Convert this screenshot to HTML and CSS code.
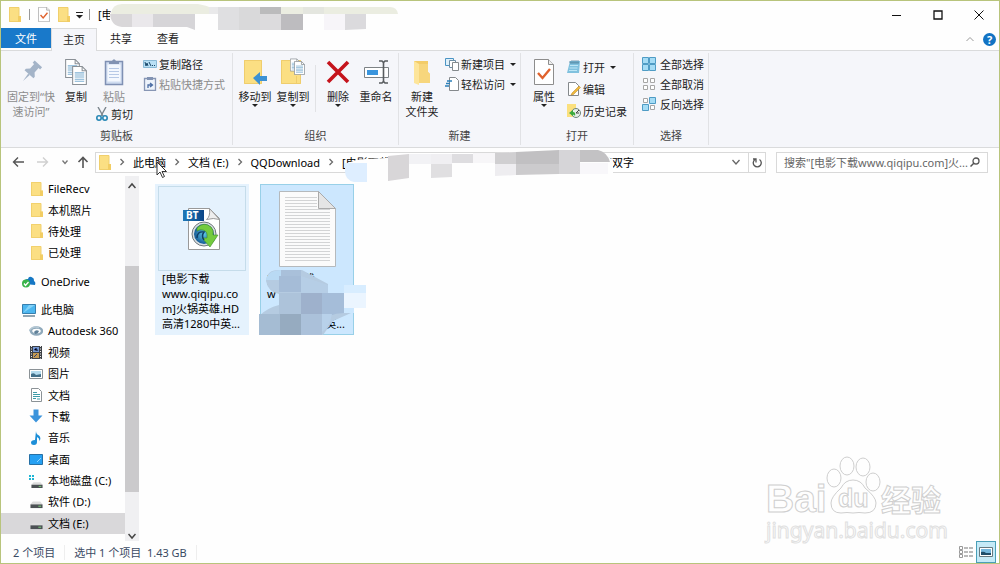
FILE: index.html
```html
<!DOCTYPE html>
<html lang="zh-CN">

<head>
    <meta charset="UTF-8">
    <meta name="viewport" content="width=device-width, initial-scale=1.0">
    <title>文件资源管理器</title>
    <link rel="stylesheet" href="styles.css">
</head>

<body>
    <svg class="defs" aria-hidden="true">
        <symbol id="folder" viewBox="0 0 12 15" preserveAspectRatio="none">
            <path d="M0 0h10v15H0z" fill="#fbdf83"/>
            <path d="M0.5.5h9.500v14h-9.500z" fill="none" stroke="#f0cf6c"/>
            <path d="M9 9h3v6H9z" fill="#f2cd63"/>
        </symbol>
        <symbol id="chev" viewBox="0 0 6 8">
            <path d="M1.500 1l3 3-3 3" fill="none" stroke="#6b6b6b" stroke-width="1.300"/>
        </symbol>
        <symbol id="checkdoc" viewBox="0 0 20 26">
            <path d="M.5.5h14l5 5v20H.5z" fill="#fff" stroke="#8d8d8d"/>
            <path d="M14.500.5v5h5" fill="#eee" stroke="#8d8d8d"/>
            <path d="M4 14l4.500 5L16 10" fill="none" stroke="#e0622d" stroke-width="2.400"/>
        </symbol>
        <symbol id="page" viewBox="0 0 14 18">
            <path d="M.5.5h9l4 4v13H.5z" fill="#fff" stroke="#8a9096"/>
            <path d="M9.500.5v4h4" fill="none" stroke="#8a9096"/>
            <path d="M2.500 6.500h9M2.500 8.500h9M2.500 10.500h9M2.500 12.500h9M2.500 14.500h9" stroke="#7fb0d2"/>
        </symbol>
        <symbol id="drive" viewBox="0 0 14 14">
            <path d="M3 6h8l2.500 3H.5z" fill="#dcdcdc"/>
            <path d="M.5 9h13v4H.5z" fill="#4c5154"/>
            <path d="M9 11h3" stroke="#7ddc7a"/>
        </symbol>
    </svg>

    <div class="window">
        <header class="titlebar">
            <svg class="ic-folder"><use href="#folder"/></svg>
            <span class="bar"></span>
            <svg class="ic-check"><use href="#checkdoc"/></svg>
            <svg class="ic-folder"><use href="#folder"/></svg>
            <svg class="ic-more" viewBox="0 0 7 8"><path d="M0 1.500h7" stroke="#222"/><path d="M0 4h7L3.500 7.500z" fill="#222"/></svg>
            <span class="bar"></span>
            <h1>[电影下载www.qiqipu.com]火锅英雄.HD高清1280中英双字</h1>
            <div class="winbtns">
                <button aria-label="最小化"><svg viewBox="0 0 10 10"><path d="M0 5.500h9" stroke="#111"/></svg></button>
                <button aria-label="最大化"><svg viewBox="0 0 10 10"><path d="M1 1h8v8H1z" fill="none" stroke="#111" stroke-width="1.300"/></svg></button>
                <button aria-label="关闭"><svg viewBox="0 0 10 10"><path d="M.5.5l9 9M9.500.5l-9 9" stroke="#111"/></svg></button>
            </div>
            <!-- censored title -->
            <svg class="smear smear-title" viewBox="0 0 290 28">
                <path d="M0 10Q2 1 12 1H280Q287 4 288 11V27H0z" fill="#fefefe"/>
                <path d="M1 11Q2 1 12 1H88Q98 3 99 4H280Q287 4 288 11z" fill="#ebede1"/>
                <path d="M0 11h22v13H12Q1 23 0 11z" fill="#d9d7d9"/>
                <path d="M22 11h21v13H22z" fill="#eae8eb"/>
                <path d="M43 11h42v16l-8-3H43z" fill="#d6d5d8"/>
                <path d="M99 4h9v7h-9z" fill="#e9e9ea"/>
                <path d="M108 4h21v23h-21z" fill="#dfdfe1"/>
                <path d="M129 4h21v23h-21z" fill="#d9d9da"/>
                <path d="M150 11h21v16h-21z" fill="#dcdbdd"/>
                <path d="M150 4h21v7h-21z" fill="#bbbbbc"/>
                <path d="M171 11h22v16h-22z" fill="#bdbcbf"/>
                <path d="M193 4h21v7h-21z" fill="#e4e6df"/>
                <path d="M214 11h21v16h-21z" fill="#f7f5f9"/>
                <path d="M235 11h21v15l-21 1z" fill="#dbdadd"/>
            </svg>
        </header>

        <nav class="tabs">
            <button class="tab file">文件</button>
            <button class="tab active">主页</button>
            <button class="tab">共享</button>
            <button class="tab">查看</button>
            <div class="tabs-right">
                <svg class="ic-up" viewBox="0 0 8 6"><path d="M.5 5L4 1.500 7.500 5" fill="none" stroke="#999"/></svg>
                <button class="help" aria-label="帮助">?</button>
            </div>
        </nav>

        <section class="ribbon">
            <div class="group clipboard">
                <div class="tools">
                    <button class="big wide off">
                        <svg viewBox="0 0 28 28"><g transform="rotate(42 14 14)" fill="#a4b4c8"><path d="M9 3h10v3h-2v6l3 3v2H8v-2l3-3V6H9z"/><path d="M13 17h2l-1 9z"/></g></svg>
                        <span>固定到“快<br>速访问”</span>
                    </button>
                    <button class="big">
                        <svg viewBox="0 0 28 28"><use href="#page" x="3" y="1" width="15" height="19"/><use href="#page" x="10" y="8" width="15" height="19"/></svg>
                        <span>复制</span>
                    </button>
                    <div class="paste">
                        <button class="big off">
                            <svg viewBox="0 0 28 28"><path d="M5.500 3.500h17v23h-17z" fill="#cfdcf0" stroke="#7f90b3" stroke-width="1.500"/><path d="M7.500 6.500h13v17h-13z" fill="#f4f8fe"/><path d="M9 10.500h10M9 13.500h10M9 16.500h10M9 19.500h10" stroke="#b7c9e6"/><path d="M9 3h3q2-3.500 4 0h3v3H9z" fill="#8293b3"/></svg>
                            <span>粘贴</span>
                        </button>
                        <button class="small">
                            <svg viewBox="0 0 14 14"><path d="M3 0l5 9M11 0L6 9" stroke="#7b858c" stroke-width="1.400"/><circle cx="4" cy="11" r="2.200" fill="none" stroke="#2787b5" stroke-width="1.600"/><circle cx="10" cy="11" r="2.200" fill="none" stroke="#2787b5" stroke-width="1.600"/></svg>
                            剪切
                        </button>
                    </div>
                    <div class="list">
                        <button class="small">
                            <svg viewBox="0 0 14 14"><path d="M.5 3.500h13v7H.5z" fill="#b9e0f5" stroke="#8ab9d5"/><path d="M2 5l1 4 1-3 1 3M6 5l2 4M9 8.500h1M11 8.500h1" fill="none" stroke="#19486b"/></svg>
                            复制路径
                        </button>
                        <button class="small off">
                            <svg viewBox="0 0 14 14"><path d="M1.500 1.500h11v12h-11z" fill="#edf3fb" stroke="#8796b4" stroke-width="1.300"/><path d="M4 0h6v3H4z" fill="#8293b3"/><path d="M5 11V8h4M7 6l2.500 2L7 10" fill="none" stroke="#4c6ea5" stroke-width="1.300"/></svg>
                            粘贴快捷方式
                        </button>
                    </div>
                </div>
                <h2>剪贴板</h2>
            </div>

            <div class="group organize">
                <div class="tools">
                    <button class="big drop">
                        <svg viewBox="0 0 28 28"><path d="M3 2h18v24H3z" fill="#fbdf83"/><path d="M3.500 2.500h17v23h-17z" fill="none" stroke="#efcd6d"/><path d="M12 20l7-6v4h7v5h-7v4z" fill="#3c91d3"/></svg>
                        <span>移动到</span>
                    </button>
                    <button class="big drop">
                        <svg viewBox="0 0 28 28"><path d="M2 2h20v24H2z" fill="#fbdf83"/><path d="M2.500 2.500h19v23h-19zM17.500 18v8" fill="none" stroke="#efcd6d"/><use href="#page" x="11" y="0" width="10" height="14"/><use href="#page" x="15" y="3" width="11" height="14"/></svg>
                        <span>复制到</span>
                    </button>
                    <span class="line"></span>
                    <button class="big drop">
                        <svg viewBox="0 0 28 28"><path d="M4 4l20 20M24 4L4 24" stroke="#c5141c" stroke-width="3.600"/></svg>
                        <span>删除</span>
                    </button>
                    <button class="big">
                        <svg viewBox="0 0 28 28"><path d="M2.500 9.500h24v10h-24z" fill="#fff" stroke="#7d8285"/><path d="M5 12h11v5H5z" fill="#3a95dd"/><path d="M17 3h3l1.500 1.500L23 3h3M21.500 4v20M17 25h3l1.500-1.500L23 25h3" fill="none" stroke="#585c5f" stroke-width="1.600"/></svg>
                        <span>重命名</span>
                    </button>
                </div>
                <h2>组织</h2>
            </div>

            <div class="group">
                <div class="tools">
                    <button class="big">
                        <svg viewBox="0 0 28 28"><path d="M6 3h14v11l2 2v9H6z" fill="#f3cc68"/><path d="M6 3l5 3v21l-5-2z" fill="#fde59a"/><path d="M11 6h9v8l2 2v9H11z" fill="#f7d67c"/></svg>
                        <span>新建<br>文件夹</span>
                    </button>
                    <div class="list">
                        <button class="small arrow">
                            <svg viewBox="0 0 14 14"><path d="M.5 1.500h8v7h-8z" fill="#dff0fa" stroke="#4b94c4"/><path d="M4.500 3.500h6v7h-6z" fill="#fff" stroke="#6d8da3"/><path d="M7.500 5.500h6v8h-6z" fill="#fff" stroke="#858a8d"/></svg>
                            新建项目
                        </button>
                        <button class="small arrow">
                            <svg viewBox="0 0 14 14"><path d="M4.500.5h6l3 3v10h-9z" fill="#fff" stroke="#85898c"/><path d="M2 4h5M1 6.500h4M0 9h4" stroke="#2b7fb8" stroke-width="1.300" fill="none"/></svg>
                            轻松访问
                        </button>
                    </div>
                </div>
                <h2>新建</h2>
            </div>

            <div class="group">
                <div class="tools">
                    <button class="big drop">
                        <svg viewBox="0 0 28 28"><use href="#checkdoc" x="4" y="1" width="20" height="26"/></svg>
                        <span>属性</span>
                    </button>
                    <div class="list loose">
                        <button class="small arrow">
                            <svg viewBox="0 0 14 14"><path d="M3 1h10l-1 12H0z" fill="#80c1de"/><path d="M3 3h9M3 1v2M5 0v3M7 0v3M9 0v3M11 0v3" stroke="#4c7d96" stroke-width=".7"/><path d="M3 5.500h8M2.500 8h8M2 10.500h8" stroke="#bde6f5"/></svg>
                            打开
                        </button>
                        <button class="small">
                            <svg viewBox="0 0 14 14"><path d="M1.500.5h7l3 3v10h-10z" fill="#fff" stroke="#85898c"/><path d="M5 11l7-7 1.500 1.500-7 7L4 13z" fill="#efb93d" stroke="#b78322" stroke-width=".5"/></svg>
                            编辑
                        </button>
                        <button class="small">
                            <svg viewBox="0 0 14 14"><path d="M0 0h9v13H0z" fill="#fbe07e"/><circle cx="9" cy="9" r="4.500" fill="#e5efe8" stroke="#6d8379"/><path d="M9 9l3-3M9 9h3" stroke="#444"/><path d="M2 9l4-3v2q3 0 2 4Q6 9 6 12z" fill="#39aa3c"/></svg>
                            历史记录
                        </button>
                    </div>
                </div>
                <h2>打开</h2>
            </div>

            <div class="group select">
                <div class="tools">
                    <div class="list">
                        <button class="small">
                            <svg viewBox="0 0 14 14"><path d="M.5.5h6v6h-6zM7.500.5h6v6h-6zM.5 7.500h6v6h-6zM7.500 7.500h6v6h-6z" fill="#a5dcf5" stroke="#4f9cc5"/></svg>
                            全部选择
                        </button>
                        <button class="small">
                            <svg viewBox="0 0 14 14"><path d="M1.500 1.500h4v4h-4zM8.500 1.500h4v4h-4zM1.500 8.500h4v4h-4zM8.500 8.500h4v4h-4z" fill="#fff" stroke="#a6a6a6"/></svg>
                            全部取消
                        </button>
                        <button class="small">
                            <svg viewBox="0 0 14 14"><path d="M1.500 1.500h4v4h-4zM8.500 8.500h4v4h-4z" fill="#fff" stroke="#a6a6a6"/><path d="M7.500.5h6v6h-6zM.5 7.500h6v6h-6z" fill="#a5dcf5" stroke="#4f9cc5"/></svg>
                            反向选择
                        </button>
                    </div>
                </div>
                <h2>选择</h2>
            </div>
        </section>

        <div class="navbar">
            <div class="arrows">
                <svg viewBox="0 0 12 12"><path d="M12 6H1.500M6 1.500L1.500 6 6 10.500" fill="none" stroke="#555" stroke-width="1.400"/></svg>
                <svg viewBox="0 0 12 12"><path d="M0 6h10.500M6 1.500L10.500 6 6 10.500" fill="none" stroke="#d0d0d0" stroke-width="1.400"/></svg>
                <svg class="tiny" viewBox="0 0 6 6"><path d="M.5 1.500L3 4.500l2.500-3" fill="none" stroke="#777" stroke-width="1.300"/></svg>
                <svg viewBox="0 0 12 12"><path d="M6 12V1.500M1.500 6L6 1.500 10.500 6" fill="none" stroke="#555" stroke-width="1.600"/></svg>
            </div>
            <div class="address">
                <svg class="ic-folder"><use href="#folder"/></svg>
                <svg class="chev"><use href="#chev"/></svg>
                <a href="#">此电脑</a>
                <svg class="chev"><use href="#chev"/></svg>
                <a href="#">文档 (E:)</a>
                <svg class="chev"><use href="#chev"/></svg>
                <a href="#">QQDownload</a>
                <svg class="chev"><use href="#chev"/></svg>
                <a href="#">[电影下载www.qiqipu.com]火锅英雄.HD高清1280中英双字</a>
                <button class="history" aria-label="历史"><svg viewBox="0 0 8 8"><path d="M.5 2L4 6l3.500-4" fill="none" stroke="#666" stroke-width="1.300"/></svg></button>
                <button class="refresh" aria-label="刷新"><svg viewBox="0 0 10 12"><path d="M7.500 3.500a4 4 0 1 1-4.500 0M1 3h3v3.500" fill="none" stroke="#555" stroke-width="1.300"/></svg></button>
            </div>
            <div class="search">
                <input type="text" aria-label="搜索" placeholder="搜索&quot;[电影下载www.qiqipu.com]火...">
                <svg viewBox="0 0 10 10"><circle cx="6" cy="4" r="3" fill="none" stroke="#555" stroke-width="1.300"/><path d="M4 6L.5 9.500" stroke="#555" stroke-width="1.500"/></svg>
            </div>
            <svg class="smear smear-path" viewBox="0 0 270 34">
                <path d="M3 14Q8 11 20 10L62 8 150 4 250 1Q262 4 268 12V25H3z" fill="#fefefe"/>
                <path d="M0 14h22v19H9Q0 31 0 22z" fill="#deeeff"/>
                <path d="M43 7l21-2v24l-21 3z" fill="#d8d6d8"/>
                <path d="M64 5h22v10H64z" fill="#f2f2f5"/>
                <path d="M86 5h21v10H86z" fill="#f0eff2"/>
                <path d="M107 5h21v9h-21z" fill="#dedde0"/>
                <path d="M86 15h21v13l-21 1z" fill="#e0dfe1"/>
                <path d="M128 4h22v10h-22z" fill="#f7f6f8"/>
                <path d="M150 4l21-1v12h-21z" fill="#d0cfd1"/>
                <path d="M150 15h21v11l-21 1z" fill="#eeedf0"/>
                <path d="M171 3l43-2v14h-43z" fill="#c1c0c2"/>
                <path d="M171 15h43v10l-43 1z" fill="#cccbcd"/>
                <path d="M214 1h21v24h-21z" fill="#d6d5d8"/>
                <path d="M235 1h18Q262 3 265 13H235z" fill="#c3c2c4"/>
                <path d="M235 14h28v11h-28z" fill="#f8f7fa"/>
            </svg>
            <svg class="cursor" viewBox="0 0 12 18"><path d="M1 1v13l3-3 2.500 5.500 2-1L6 10.500h4.500z" fill="#fff" stroke="#333"/></svg>
        </div>

        <main class="content">
            <nav class="tree">
                <a href="#" class="sub"><svg class="ic-folder"><use href="#folder"/></svg>FileRecv</a>
                <a href="#" class="sub"><svg class="ic-folder"><use href="#folder"/></svg>本机照片</a>
                <a href="#" class="sub"><svg class="ic-folder"><use href="#folder"/></svg>待处理</a>
                <a href="#" class="sub"><svg class="ic-folder"><use href="#folder"/></svg>已处理</a>
                <span class="space"></span>
                <a href="#"><svg viewBox="0 0 14 14"><path d="M3 10q-2-5 3-5 1-4 5-1 1 0 1 3 2 1 1 4z" fill="#1577c4"/><circle cx="4" cy="9.500" r="4" fill="#39b44a"/><path d="M2 9.500l1.500 2 3-3.500" fill="none" stroke="#fff" stroke-width="1.300"/></svg>OneDrive</a>
                <span class="space"></span>
                <a href="#"><svg viewBox="0 0 14 14"><path d="M.5 1.500h13v9H.5z" fill="#4cb6ef" stroke="#377fae"/><path d="M1 10l6-8h6z" fill="#83d2f8"/><path d="M1 13h12" stroke="#6d8798" stroke-width="1.500"/></svg>此电脑</a>
                <a href="#" class="sub"><svg viewBox="0 0 14 14"><ellipse cx="7.500" cy="7" rx="5.500" ry="3.500" fill="none" stroke="#8fa9bb" stroke-width="2.400"/><path d="M0 7q4-6 10-3" fill="none" stroke="#b5c8d4" stroke-width="1.500"/><path d="M5 8q2-3 5-1-1 3-4 3z" fill="#5f8098"/></svg>Autodesk 360</a>
                <a href="#" class="sub"><svg viewBox="0 0 14 14"><path d="M1 1h12v13H1z" fill="#3d4045"/><path d="M4 2h6v5H4z" fill="#7799d2"/><path d="M4 8h6v5H4z" fill="#c39a53"/><path d="M2.500 1v13M11.500 1v13" stroke="#eee" stroke-dasharray="1 1.500"/><path d="M5 5l2-2 2 3M5 12l3-3" stroke="#273f7c"/></svg>视频</a>
                <a href="#" class="sub"><svg viewBox="0 0 14 14"><path d="M.5 2.500h13v9H.5z" fill="#fff" stroke="#8b9296"/><path d="M2 4h10v6H2z" fill="#b5dcef"/><path d="M2 7q3-2 5 1l5-1v3H2z" fill="#43718b"/></svg>图片</a>
                <a href="#" class="sub"><svg viewBox="0 0 14 14"><path d="M2.500.5h7l3 3v10h-10z" fill="#fff" stroke="#8b9296"/><path d="M4 4.500h4M4 6.500h7M4 8.500h7M4 10.500h3M8 11h3" stroke="#3c9ba8"/></svg>文档</a>
                <a href="#" class="sub"><svg viewBox="0 0 14 14"><path d="M4.500.5h5v6h4L7 13.500.5 6.500h4z" fill="#3c94dc"/></svg>下载</a>
                <a href="#" class="sub"><svg viewBox="0 0 14 14"><path d="M7 0q0 3 3 4.500 2.500 2.500.5 5.500 0-3-2.500-4v5q0 3-3 3T2 11.500 6 9z" fill="#1d8fd8"/></svg>音乐</a>
                <a href="#" class="sub"><svg viewBox="0 0 14 14"><path d="M.5 2.500h13v10H.5z" fill="#26a0f2" stroke="#2670a5"/><path d="M8 10l4-4" stroke="#8ed4ff"/></svg>桌面</a>
                <a href="#" class="sub"><svg viewBox="0 0 14 14"><path d="M0 1h2v2H0zM3 1h2v2H3zM0 4h2v2H0zM3 4h2v2H3z" fill="#1db5d4"/><use href="#drive" x="2" y="3" width="12" height="12"/></svg>本地磁盘 (C:)</a>
                <a href="#" class="sub"><svg viewBox="0 0 14 14"><use href="#drive" x="1" y="1" width="13" height="13"/></svg>软件 (D:)</a>
                <a href="#" class="sub current"><svg viewBox="0 0 14 14"><use href="#drive" x="1" y="1" width="13" height="13"/></svg>文档 (E:)</a>
            </nav>
            <div class="scroll">
                <svg viewBox="0 0 8 8"><path d="M.5 6L4 2l3.500 4" fill="none" stroke="#444" stroke-width="1.500"/></svg>
                <div class="track"><div class="thumb"></div></div>
                <svg viewBox="0 0 8 8"><path d="M.5 2L4 6l3.500-4" fill="none" stroke="#444" stroke-width="1.500"/></svg>
            </div>
            <section class="files">
                <figure class="item hover">
                    <div class="thumbbox">
                        <svg class="ic-bt" viewBox="0 0 38 46">
                            <defs>
                                <linearGradient id="btblue" x1="0" x2="1"><stop offset="0" stop-color="#1f79b8"/><stop offset="1" stop-color="#0c4587"/></linearGradient>
                                <radialGradient id="btball"><stop offset="0" stop-color="#5fc8e8"/><stop offset="1" stop-color="#145a96"/></radialGradient>
                            </defs>
                            <path d="M5.500 2.500h21l10 10v31h-31z" fill="#fff" stroke="#999"/>
                            <path d="M26.500 2.500q1 8-3 11 7-2 13 0z" fill="#eee" stroke="#999"/>
                            <circle cx="21" cy="28" r="12" fill="#d9dee0" stroke="#70797d"/>
                            <circle cx="21" cy="28" r="10" fill="url(#btball)"/>
                            <path d="M14 22q7-7 14-1 3 3 2 8h5l-8 12-8-9h5q1-7-4-8-3-1-6 1z" fill="#74cb3f" stroke="#3f8f2c" stroke-width=".6"/>
                            <path d="M14 32q0-7 7-6-3 4 0 8" fill="none" stroke="#103f68" stroke-width="1.500"/>
                            <path d="M0 4h21v11H0z" fill="url(#btblue)"/>
                            <text x="3" y="13" font-size="10">BT</text>
                        </svg>
                    </div>
                    <figcaption>[电影下载<br>www.qiqipu.co<br>m]火锅英雄.HD<br>高清1280中英...</figcaption>
                </figure>
                <figure class="item selected">
                    <div class="thumbbox">
                        <svg class="ic-txt" viewBox="0 0 57 76">
                            <path d="M.5.5h39l17 17v58H.5z" fill="#fbfbfb" stroke="#b5b9bc"/>
                            <path d="M6 6.500h32M6 9.500h32M6 12.500h32M6 15.500h32M6 18.500h45M6 21.500h45M6 24.500h45M6 27.500h45M6 30.500h45M6 33.500h45M6 36.500h45M6 39.500h45M6 42.500h45M6 45.500h45M6 48.500h45M6 51.500h45M6 54.500h45M6 57.500h45M6 60.500h45M6 63.500h45M6 66.500h45M6 69.500h45" stroke="#d3d4d5"/>
                            <path d="M39.500.5v17h17z" fill="#e5e5e5" stroke="#aaa"/>
                        </svg>
                    </div>
                    <figcaption>[电影下载<br>www.qiqipu.co<br>m]火锅英雄.HD<br>高清1280中英...</figcaption>
                    <svg class="smear smear-file" viewBox="0 0 114 72">
                        <path d="M5 35h19v14H5zM17 23h10v12H17zM62 19h27v16H62z" fill="#cce7fe"/>
                        <path d="M7 15Q8 4 19 4h24l26 14v9h38v20H92l-18 8-10 14H0V50Q8 42 20 39L20 28Q9 26 7 15z" fill="#b5cbe1"/>
                        <path d="M7 14Q9 4 22 4v10z" fill="#b9daf4"/>
                        <path d="M22 4h20v6H22z" fill="#a9c0da"/>
                        <path d="M20 10h22v16H20z" fill="#a5bcd7"/>
                        <path d="M42 10l27 9v8H42z" fill="#b6cee6"/>
                        <path d="M20 27h22v21H20z" fill="#adc3da"/>
                        <path d="M42 27h21v21H42z" fill="#9eb1cc"/>
                        <path d="M63 27h22v20q-8 0-15 3l-7-2z" fill="#a5bdd9"/>
                        <path d="M0 48h21v21H0z" fill="#a5bcd3"/>
                        <path d="M21 48h21v21H21z" fill="#96abc0"/>
                        <path d="M42 48h21v21H42z" fill="#abc1da"/>
                        <path d="M63 48h10q-2 12-10 18z" fill="#b8d1ea"/>
                        <path d="M85 19h22v8H85z" fill="#d8edff"/>
                        <path d="M85 27h22v20H85z" fill="#cce7fe"/>
                        <path d="M85 27h22v15H85z" fill="#ebf5ff"/>
                        <path d="M95 42h12v5H95z" fill="#fefefe"/>
                    </svg>
                </figure>
                <svg class="watermark" viewBox="0 0 184 92">
                    <g class="mark">
                        <text class="bai" x="2" y="57" font-size="39">Bai</text>
                        <ellipse cx="70" cy="23" rx="7" ry="9"/>
                        <ellipse cx="83" cy="11" rx="7" ry="9"/>
                        <ellipse cx="99" cy="12" rx="7" ry="9"/>
                        <ellipse cx="109" cy="27" rx="7" ry="9"/>
                        <path d="M89 25q8 0 12 8 11 9 11 15 0 10-11 10-6-1-12 0-6-1-12 0-10 0-10-10 0-6 10-15 4-8 12-8z"/>
                        <text class="du" x="74" y="52" font-size="25">du</text>
                        <text class="jy" x="117" y="56" font-size="30">经验</text>
                    </g>
                    <text class="url" x="2" y="83" font-size="21">jingyan.baidu.com</text>
                </svg>
            </section>
        </main>

        <footer class="status">
            <span>2 个项目</span>
            <span>选中 1 个项目&nbsp; 1.43 GB</span>
            <div class="views">
                <button aria-label="详细信息"><svg viewBox="0 0 14 12"><path d="M.5.5h3v3h-3zM.5 4.500h3v3h-3zM.5 8.500h3v3h-3z" fill="none" stroke="#999"/><path d="M5 2h4M10 2h4M5 6h4M10 6h4M5 10h4M10 10h4" stroke="#777"/></svg></button>
                <button class="on" aria-label="大图标"><svg viewBox="0 0 14 12"><path d="M.5 1.500h13v9H.5z" fill="#fff" stroke="#67787f"/><path d="M2 3h10v6H2z" fill="#74b7dc"/><path d="M2 6q3-1 5 1h5v2H2z" fill="#1f4d68"/></svg></button>
            </div>
        </footer>
    </div>
</body>

</html>
```
FILE: styles.css
```css
* {
    margin: 0;
    padding: 0;
    box-sizing: border-box;
}

body {
    font-family: "Noto Sans", "Noto Sans CJK SC", sans-serif;
    font-size: 11px;
    line-height: 15px;
    color: #222;
    background: #fefefe;
}

button {
    font: inherit;
    color: inherit;
    background: none;
    border: none;
}

a {
    color: inherit;
    text-decoration: none;
}

h1,
h2 {
    font-size: 11px;
    font-weight: normal;
}

svg {
    display: block;
    flex: none;
}

.defs {
    position: absolute;
    width: 0;
    height: 0;
}

.window {
    display: flex;
    flex-direction: column;
    height: 100vh;
    border: 1px solid #b8c47c;
}

.ic-folder {
    width: 12px;
    height: 15px;
}

.smear {
    position: absolute;
    pointer-events: none;
}

/* title bar */
.titlebar {
    position: relative;
    display: flex;
    align-items: center;
    gap: 8px;
    height: 27px;
    padding-left: 8px;
}

.titlebar .bar {
    width: 1px;
    height: 11px;
    background: #999;
}

.ic-check {
    width: 12px;
    height: 15px;
}

.ic-more {
    width: 7px;
    height: 8px;
    margin: 0 -2px;
}

.titlebar h1 {
    color: #000;
    white-space: nowrap;
}

.winbtns {
    display: flex;
    margin-left: auto;
}

.winbtns button {
    display: flex;
    justify-content: center;
    width: 41px;
    padding: 8px 0;
}

.winbtns svg {
    width: 10px;
    height: 10px;
}

.smear-title {
    left: 109px;
    top: 2px;
    width: 290px;
    height: 28px;
}

/* tabs */
.tabs {
    display: flex;
    gap: 1px;
    height: 23px;
    border-bottom: 1px solid #dadbdc;
}

.tab {
    padding: 0 12px;
    height: 21px;
}

.tab.file {
    width: 50px;
    height: 20px;
    margin-right: -1px;
    background: #1979ca;
    color: #fff;
}

.tab.active {
    height: 23px;
    border: 1px solid #dadbdc;
    border-bottom: none;
    padding: 0 11px 2px;
    background: #f5f6fa;
}

.tabs-right {
    display: flex;
    align-items: center;
    gap: 9px;
    margin-left: auto;
    padding-right: 3px;
}

.ic-up {
    width: 8px;
    height: 6px;
}

.help {
    width: 13px;
    height: 13px;
    border-radius: 50%;
    background: #1273c4;
    color: #fff;
    font-weight: bold;
    line-height: 13px;
}

/* ribbon */
.ribbon {
    display: flex;
    height: 97px;
    background: #f5f6fa;
    border-bottom: 1px solid #dadbdc;
}

.group {
    display: flex;
    flex-direction: column;
    margin: 2px 0;
    padding: 0 4px;
    border-right: 1px solid #e1e2e5;
}

.group.organize {
    padding: 0 3px;
}

.tools {
    display: flex;
    flex: 1;
}

.group h2 {
    height: 17px;
    text-align: center;
    color: #444;
}

.big {
    display: flex;
    flex-direction: column;
    align-items: center;
    width: 38px;
    padding-top: 5px;
    align-self: flex-start;
    white-space: nowrap;
}

.big svg {
    width: 28px;
    height: 28px;
    margin-bottom: 3px;
}

.big.wide {
    width: 52px;
}

.off {
    color: #8c8c8c;
}

.drop::after {
    content: "";
    border: 3px solid transparent;
    border-top-color: #222;
    border-bottom: none;
}

.small {
    display: flex;
    align-items: center;
    gap: 2px;
    height: 20px;
    white-space: nowrap;
}

.small svg {
    width: 14px;
    height: 14px;
}

.arrow::after {
    content: "";
    margin-left: 3px;
    border: 3px solid transparent;
    border-top-color: #222;
    border-bottom: none;
}

.list {
    padding-top: 1px;
}

.list .small {
    padding-left: 4px;
}

.clipboard .list {
    padding-left: 6px;
    padding-right: 3px;
}

.loose {
    padding-top: 3px;
    padding-right: 2px;
}

.loose .small {
    height: 22px;
}

.select .small {
    gap: 4px;
}

.line {
    width: 1px;
    margin: 12px 3px 16px;
    background: #e1e2e5;
}

/* address row */
.navbar {
    position: relative;
    display: flex;
    align-items: center;
    height: 28px;
    padding: 0 11px;
}

.arrows {
    display: flex;
    align-items: center;
    gap: 13px;
    width: 83px;
}

.arrows svg {
    width: 12px;
    height: 12px;
}

.arrows .tiny {
    width: 6px;
    height: 6px;
    margin-right: -4px;
}

.address {
    display: flex;
    flex: 1;
    align-items: center;
    gap: 8px;
    height: 21px;
    padding-left: 3px;
    border: 1px solid #d9d9d9;
    background: #fff;
    color: #000;
    white-space: nowrap;
}

.chev {
    width: 6px;
    height: 8px;
}

.history {
    margin-left: auto;
}

.history svg {
    width: 8px;
    height: 8px;
}

.refresh {
    align-self: stretch;
    padding: 0 3px;
    border-left: 1px solid #d9d9d9;
}

.refresh svg {
    width: 10px;
    height: 12px;
}

.search {
    display: flex;
    align-items: center;
    width: 212px;
    height: 21px;
    margin-left: 10px;
    padding: 0 7px;
    border: 1px solid #d9d9d9;
    background: #fff;
}

.search input {
    flex: 1;
    min-width: 0;
    border: none;
    outline: none;
    font: inherit;
}

.search input::placeholder {
    color: #666;
}

.search svg {
    width: 10px;
    height: 10px;
}

.smear-path {
    left: 344px;
    top: 1px;
    width: 270px;
    height: 34px;
    z-index: 1;
}

.cursor {
    position: absolute;
    left: 155px;
    top: 13px;
    width: 12px;
    height: 18px;
    z-index: 1;
}

/* content */
.content {
    display: flex;
    flex: 1;
    min-height: 0;
}

.tree {
    display: flex;
    flex-direction: column;
    width: 124px;
    padding: 2px 0 7px;
    color: #000;
    white-space: nowrap;
}

.tree a {
    display: flex;
    flex: 1;
    align-items: center;
    gap: 5px;
    padding-left: 21px;
}

.tree a.sub {
    padding-left: 28px;
}

.tree a.current {
    background: #d9d8da;
}

.tree svg {
    width: 14px;
    height: 14px;
}

.tree .ic-folder {
    width: 12px;
    margin-left: 2px;
}

.tree .space {
    height: 7px;
}

.scroll {
    display: flex;
    flex-direction: column;
    align-items: center;
    width: 14px;
    padding: 6px 0 1px;
    background: #f0f0f2;
}

.scroll svg {
    width: 8px;
    height: 8px;
}

.track {
    display: flex;
    flex: 1;
    flex-direction: column;
    justify-content: flex-end;
    width: 100%;
    padding-bottom: 40px;
}

.thumb {
    height: 75%;
    background: #cbcacc;
}

.files {
    position: relative;
    display: flex;
    flex: 1;
    gap: 11px;
    align-items: flex-start;
    padding: 8px 16px;
}

.item {
    position: relative;
    width: 94px;
    height: 151px;
    padding: 1px 2px;
    border: 1px solid transparent;
    color: #000;
}

.item.hover {
    background: #e5f2fd;
}

.item.selected {
    background: #cce7fe;
    border-color: #98d0e8;
}

.thumbbox {
    display: flex;
    justify-content: center;
    align-items: center;
    height: 85px;
    border: 1px solid transparent;
}

.hover .thumbbox {
    border-color: #c5dcea;
}

.ic-bt {
    width: 38px;
    height: 46px;
}

.ic-bt text {
    font-family: "Noto Sans", sans-serif;
    font-weight: bold;
    fill: #fff;
}

.ic-txt {
    width: 57px;
    height: 76px;
}

.item figcaption {
    padding: 0 4px;
    white-space: nowrap;
}

.smear-file {
    left: -2px;
    top: 81px;
    width: 114px;
    height: 72px;
}

.watermark {
    position: absolute;
    right: 51px;
    bottom: -6px;
    width: 184px;
    height: 92px;
}

.mark {
    fill: #fefefe;
    stroke: #cfcfcf;
}

.bai,
.du {
    font-family: "Liberation Sans", sans-serif;
    font-weight: bold;
}

.jy {
    font-family: "Noto Sans CJK SC", sans-serif;
    font-weight: bold;
}

.url {
    font-family: "Noto Sans", sans-serif;
    fill: #fefefe;
    stroke: #e0e0e0;
}

/* status bar */
.status {
    display: flex;
    align-items: center;
    height: 22px;
    padding-left: 12px;
    color: #3a4a63;
}

.status span {
    padding-right: 9px;
    margin-right: 9px;
    border-right: 1px solid #eee;
}

.views {
    display: flex;
    align-self: stretch;
    margin-left: auto;
    padding-right: 3px;
}

.views button {
    width: 20px;
    padding: 0 3px;
}

.views .on {
    padding: 0 2px;
    border: 1px solid #4a9fb8;
    background: #c5eaf7;
}

.views svg {
    width: 14px;
    height: 12px;
}
```
